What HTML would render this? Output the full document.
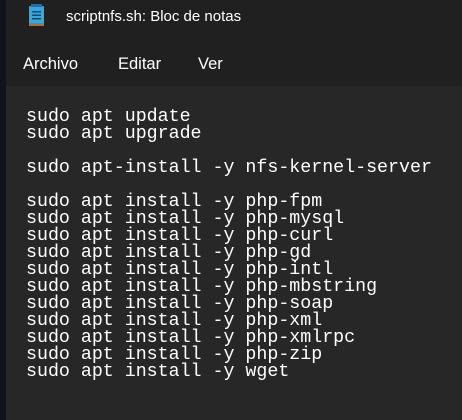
<!DOCTYPE html>
<html><head><meta charset="utf-8"><style>
html,body{margin:0;padding:0;width:462px;height:420px;overflow:hidden;background:#202020;}
.strip{position:absolute;left:0;top:0;width:6px;height:420px;background:#11131a;}
.title{position:absolute;left:6px;top:0;width:456px;height:86px;background:#202020;}
.ttl{position:absolute;left:60px;top:8px;font:15px "Liberation Sans",sans-serif;color:#fff;}
.menu{position:absolute;top:55px;font:16.5px "Liberation Sans",sans-serif;color:#fff;}
.ed{position:absolute;left:6px;top:86px;width:456px;height:334px;background:#272727;}
pre{position:absolute;left:26px;top:109px;margin:0;font:18.3px/17px "Liberation Mono",monospace;color:#fff;}
</style></head><body>
<div class="strip"></div>
<div class="title">
<svg style="position:absolute;left:22px;top:4px" width="18" height="22" viewBox="0 0 18 22">
<rect x="1" y="2" width="15" height="18" rx="1" fill="#35a9dd"/>
<rect x="1" y="19" width="15" height="3" fill="#c0692b"/>
<rect x="3" y="0" width="11" height="3" fill="#1c6fa8"/>
<rect x="4" y="7" width="9" height="1.5" fill="#13456b"/>
<rect x="4" y="10.5" width="9" height="1.5" fill="#13456b"/>
<rect x="4" y="14" width="9" height="1.5" fill="#13456b"/>
</svg>
<div class="ttl">scriptnfs.sh: Bloc de notas</div>
</div>
<div class="menu" style="left:23px">Archivo</div>
<div class="menu" style="left:118px">Editar</div>
<div class="menu" style="left:198px">Ver</div>
<div class="ed"></div>
<pre>sudo apt update
sudo apt upgrade

sudo apt-install -y nfs-kernel-server

sudo apt install -y php-fpm
sudo apt install -y php-mysql
sudo apt install -y php-curl
sudo apt install -y php-gd
sudo apt install -y php-intl
sudo apt install -y php-mbstring
sudo apt install -y php-soap
sudo apt install -y php-xml
sudo apt install -y php-xmlrpc
sudo apt install -y php-zip
sudo apt install -y wget</pre>
</body></html>
